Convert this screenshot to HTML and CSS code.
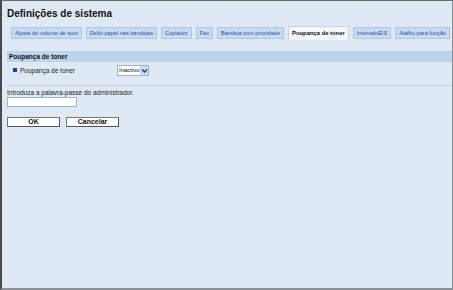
FILE: index.html
```html
<!DOCTYPE html>
<html lang="pt">
<head>
<meta charset="utf-8">
<link rel="stylesheet" href="styles.css">
<title>Definições de sistema</title>
</head>
<body>
<div class="frame">
  <h1 class="title">Definições de sistema</h1>
  <div class="tabs">
    <span class="tab">Ajuste do volume de som</span>
    <span class="tab">Defin papel nas bandejas</span>
    <span class="tab">Copiador</span>
    <span class="tab">Fax</span>
    <span class="tab">Bandeja com prioridade</span>
    <span class="tab active">Poupança de toner</span>
    <span class="tab">IntervaloE/S</span>
    <span class="tab">Atalho para função</span>
  </div>
  <div class="section-head">Poupança de toner</div>
  <div class="row">
    <span class="label"><span class="bullet"></span>Poupança de toner</span>
    <span class="select"><span class="sel-text">Inactivo</span><span class="sel-btn"><svg width="7" height="7" viewBox="0 0 7 7"><path d="M1 2.5 L3.5 5 L6 2.5" fill="none" stroke="#1d3f8a" stroke-width="1.4"/></svg></span></span>
  </div>
  <div class="sep"></div>
  <div class="pw">
    <div class="pw-label">Introduza a palavra-passe do administrador.</div>
    <div class="input"></div>
  </div>
  <div class="buttons">
    <span class="btn">OK</span>
    <span class="btn">Cancelar</span>
  </div>
</div>
</body>
</html>
```
FILE: styles.css
```css
html, body { margin: 0; padding: 0; }
body {
  width: 453px; height: 290px; overflow: hidden;
  font-family: "Liberation Sans", Arial, sans-serif;
  background: #dfe9f4;
}
.frame {
  box-sizing: border-box;
  width: 453px; height: 290px;
  background: #dfe9f4;
  border-top: 1px solid #6b6b6b;
  border-left: 2px solid #4a4a4a;
  border-right: 1px solid #8a8f96;
  border-bottom: 2px solid #8a8f96;
  padding: 0 0 0 5px;
}
.title {
  margin: 0;
  padding-top: 7px;
  height: 18px;
  font-size: 10px;
  font-weight: bold;
  color: #111;
}
.tabs {
  display: flex;
  gap: 4px;
  padding-left: 4px;
  align-items: flex-end;
  height: 14px;
}
.tab {
  flex-shrink: 0;
  box-sizing: border-box;
  height: 12px;
  margin-bottom: 1px;
  padding: 0 3px;
  background: #c6dbf1;
  border: 1px solid #b0c6de;
  color: #2c4ea5;
  font-size: 5.6px;
  line-height: 10px;
  white-space: nowrap;
}
.tab.active {
  height: 14px;
  margin-bottom: 0;
  background: #f3f6fa;
  border-color: #c9d3de;
  border-bottom: none;
  color: #111;
  font-weight: bold;
  font-size: 5.85px;
  line-height: 13px;
}
.section-head {
  margin-top: 11px;
  height: 11px;
  background: #bcd4ee;
  font-size: 6.5px;
  font-weight: bold;
  line-height: 11px;
  padding-left: 2px;
  color: #111;
}
.row {
  display: flex;
  align-items: center;
  height: 16px;
  padding-left: 6px;
  font-size: 6.5px;
  color: #222;
}
.label { width: 104px; display: flex; align-items: center; }
.bullet {
  display: inline-block;
  width: 4px; height: 4px;
  background: #1f3f98;
  margin-right: 3px;
}
.select {
  display: flex;
  height: 11px;
  box-sizing: border-box;
  border: 1px solid #9fb3ca;
  background: #fff;
}
.sel-text { padding: 0 2px 0 1px; line-height: 9px; font-size: 6px; color: #111; width: 19px; white-space: nowrap; }
.sel-btn {
  width: 8px;
  background: #c9dcf2;
  display: flex; align-items: center; justify-content: center;
}
.sep {
  margin-top: 7px;
  border-top: 1px solid #c9d4e0;
}
.pw { padding-top: 3px; }
.pw-label { font-size: 6.5px; color: #222; line-height: 8px; }
.input {
  margin-top: 0;
  width: 70px; height: 10px;
  box-sizing: border-box;
  border: 1px solid #9fb3ca;
  background: #fff;
}
.buttons {
  display: flex; gap: 6px;
  margin-top: 10px;
}
.btn {
  box-sizing: border-box;
  width: 53px; height: 10px;
  border: 1px solid #777;
  border-right-color: #555;
  border-bottom-color: #555;
  background: #fff;
  font-size: 7px; font-weight: bold;
  text-align: center;
  line-height: 8px;
  color: #111;
}
```
